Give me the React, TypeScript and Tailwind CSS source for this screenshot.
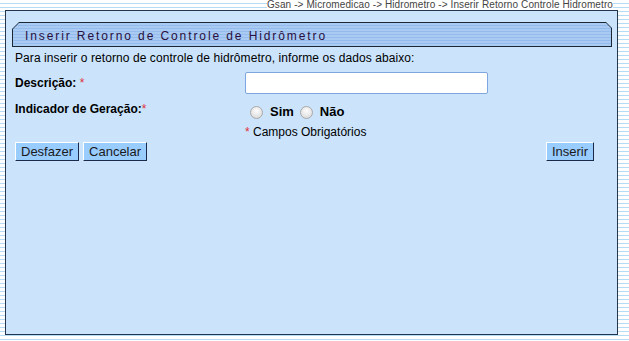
import React from "react";

const font = "font-['Liberation_Sans',Arial,sans-serif]";

function Radio({ label }: { label: string }) {
  return (
    <label className="flex items-center">
      <span className="w-[13px] h-[13px] rounded-full border border-[#a9a9a9] bg-[radial-gradient(circle_at_50%_35%,#fdfdfd,#d4d4d4)] mr-[7px]" />
      <span className="font-bold text-[13px] mr-[6px]">{label}</span>
    </label>
  );
}

function Botao({ children }: { children: React.ReactNode }) {
  return (
    <button className="h-[19px] px-[5px] bg-[#99ccff] border border-t-white border-l-white border-b-[#1b2a4a] border-r-[#1b2a4a] text-[13px] leading-none text-[#1a1a1a]">
      {children}
    </button>
  );
}

export default function App() {
  return (
    <div
      className={`${font} w-[629px] h-[341px] overflow-hidden text-black bg-[repeating-linear-gradient(to_bottom,#ffffff_0px,#ffffff_3px,#b5dbf5_3px,#b5dbf5_4px)]`}
    >
      {/* breadcrumb */}
      <div className="h-[10px] flex justify-end pr-[16px]">
        <span className="bg-white text-[10px] leading-[10px] text-[#444] tracking-[0.1px]">
          Gsan -&gt; Micromedicao -&gt; Hidrometro -&gt; Inserir Retorno Controle Hidrometro
        </span>
      </div>

      <div className="ml-[5px] w-[613px] h-[325px] border border-[#24364d] bg-[#cbe4fc] px-[6px] pt-[11px]">
        {/* barra de titulo */}
        <div className="w-[600px] h-[25px] bg-[#1c2735] p-px [clip-path:polygon(7px_0,calc(100%-6px)_0,100%_6px,100%_100%,0_100%,0_7px)]">
          <div className="h-full flex items-center pl-[12px] bg-[repeating-linear-gradient(to_bottom,#a9cbf3_0px,#a9cbf3_2px,#94bbeb_2px,#94bbeb_3px)] [clip-path:polygon(6px_0,calc(100%-5px)_0,100%_5px,100%_100%,0_100%,0_6px)]">
            <span className="text-[12px] tracking-[1.9px] text-[#2a0f40] pt-[2px]">
              Inserir Retorno de Controle de Hidrômetro
            </span>
          </div>
        </div>

        <div className="pl-[3px] text-[12px]">
          <p className="mt-[4px] leading-[14px] tracking-[0.08px]">
            Para inserir o retorno de controle de hidrômetro, informe os dados abaixo:
          </p>

          <div className="flex items-center mt-[7px] h-[22px]">
            <div className="w-[230px] font-bold">
              Descrição: <span className="text-[#e0303a] font-normal">*</span>
            </div>
            <input
              type="text"
              className="w-[243px] h-[22px] bg-white border border-[#7ea6e0] rounded-[2px] outline-none"
            />
          </div>

          <div className="flex mt-[5px]">
            <div className="w-[230px] font-bold pt-px">
              Indicador de Geração:<span className="text-[#e0303a] font-normal">*</span>
            </div>
            <div>
              <div className="flex items-center pl-[5px] h-[18px] mt-[4px]">
                <Radio label="Sim" />
                <Radio label="Não" />
              </div>
              <div className="mt-[4px] leading-[14px]">
                <span className="text-[#e0303a]">*</span> Campos Obrigatórios
              </div>
            </div>
          </div>

          <div className="flex justify-between items-center mt-[3px] w-[579px]">
            <div className="flex gap-[4px]">
              <Botao>Desfazer</Botao>
              <Botao>Cancelar</Botao>
            </div>
            <Botao>Inserir</Botao>
          </div>
        </div>
      </div>
    </div>
  );
}
